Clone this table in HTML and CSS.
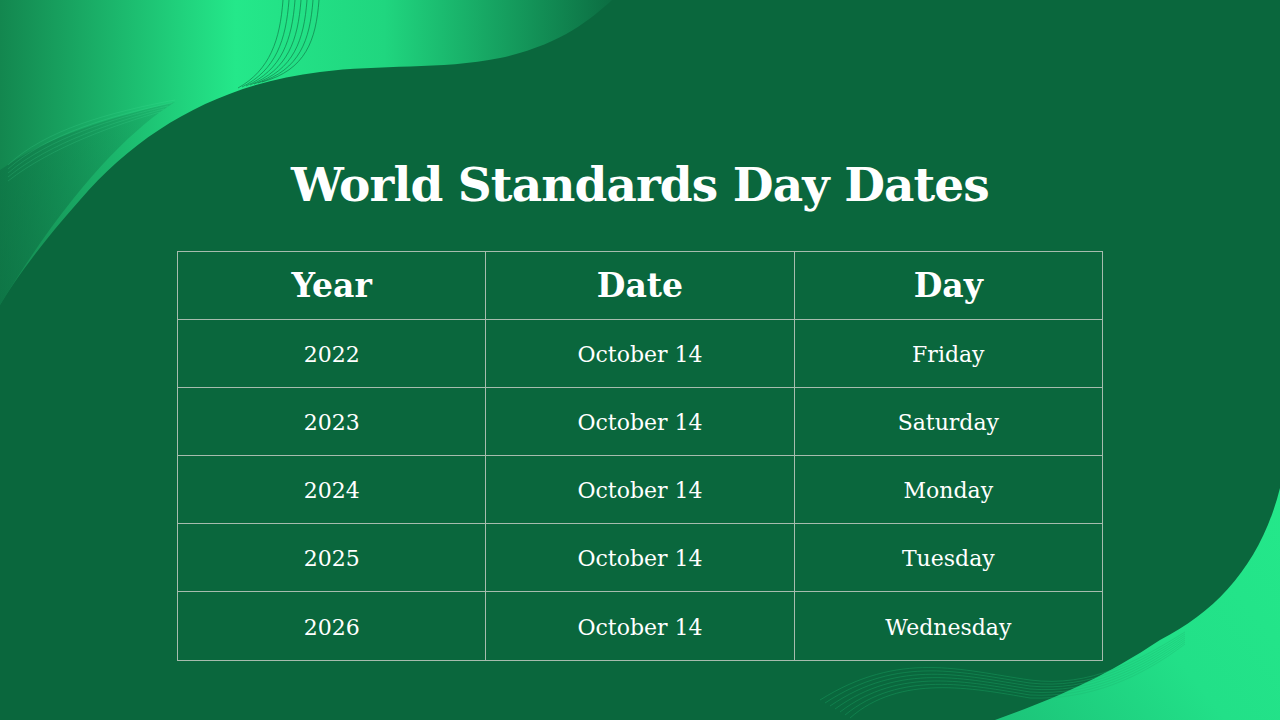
FILE: index.html
```html
<!DOCTYPE html>
<html lang="en">
<head>
<meta charset="utf-8">
<title>World Standards Day Dates</title>
<link rel="stylesheet" href="styles.css">
</head>
<body>
<div class="slide">
  <svg class="bg" width="1280" height="720" viewBox="0 0 1280 720" aria-hidden="true">
    <defs>
      <linearGradient id="gTop" x1="0" y1="0" x2="620" y2="0" gradientUnits="userSpaceOnUse">
        <stop offset="0" stop-color="#13874f"/>
        <stop offset="0.38" stop-color="#24e88a"/>
        <stop offset="0.62" stop-color="#20d67f"/>
        <stop offset="1" stop-color="#0b6a40"/>
      </linearGradient>
      <linearGradient id="gShade" x1="0" y1="300" x2="260" y2="60" gradientUnits="userSpaceOnUse">
        <stop offset="0" stop-color="#0b6a40" stop-opacity="0.6"/>
        <stop offset="1" stop-color="#0b6a40" stop-opacity="0"/>
      </linearGradient>
      <linearGradient id="gBot" x1="1000" y1="720" x2="1280" y2="500" gradientUnits="userSpaceOnUse">
        <stop offset="0" stop-color="#1cc479"/>
        <stop offset="0.5" stop-color="#22e088"/>
        <stop offset="1" stop-color="#24e88a"/>
      </linearGradient>
    </defs>
    <path d="M0 0 H612 C590 20 560 45 500 58 C440 70 380 64 320 72 C220 84 140 130 80 200 C40 245 15 280 0 305 Z" fill="url(#gTop)"/>
    <path d="M0 170 C50 135 110 118 175 102 C130 130 70 190 0 305 Z" fill="url(#gShade)"/>
    <g fill="none" stroke="#0b5a35" stroke-width="0.6" opacity="0.85">
      <path d="M283 0 C280 40 270 70 238 88"/>
      <path d="M289 0 C286 40 276 70 242 87"/>
      <path d="M295 0 C292 40 282 70 246 86"/>
      <path d="M301 0 C298 40 288 70 250 85"/>
      <path d="M307 0 C304 40 294 70 254 84"/>
      <path d="M313 0 C310 40 300 70 258 83"/>
      <path d="M319 0 C316 40 306 70 262 82"/>
    </g>
    <g fill="none" stroke="#4fe6a0" stroke-width="0.5" opacity="0.35">
      <path d="M8 165 C45 130 110 112 175 100"/>
      <path d="M8 169 C47 134 112 115 172 103"/>
      <path d="M8 173 C49 138 114 118 168 106"/>
      <path d="M8 177 C51 142 116 121 164 109"/>
      <path d="M8 181 C53 146 118 124 160 112"/>
    </g>
    <path d="M1280 488 C1262 560 1220 610 1160 640 C1100 680 1050 700 995 720 H1280 Z" fill="url(#gBot)"/>
    <g fill="none" stroke="#1fb56f" stroke-width="0.6" opacity="0.55">
      <path d="M820 700 C900 650 960 670 1030 680 C1090 688 1140 660 1185 632"/>
      <path d="M825 703 C900 654 962 673 1030 683 C1090 690 1140 663 1185 634"/>
      <path d="M830 706 C900 658 964 676 1030 686 C1090 692 1140 666 1185 636"/>
      <path d="M835 709 C900 662 966 679 1030 689 C1090 694 1140 669 1185 638"/>
      <path d="M840 712 C900 666 968 682 1030 692 C1090 696 1140 672 1185 640"/>
      <path d="M845 715 C900 670 970 685 1030 695 C1090 698 1140 675 1185 642"/>
      <path d="M850 718 C900 674 972 688 1030 698 C1090 700 1140 678 1185 644"/>
    </g>
  </svg>
  <main class="content">
    <h1 class="title">World Standards Day Dates</h1>
    <table class="dates">
      <thead>
        <tr><th>Year</th><th>Date</th><th>Day</th></tr>
      </thead>
      <tbody>
        <tr><td>2022</td><td>October 14</td><td>Friday</td></tr>
        <tr><td>2023</td><td>October 14</td><td>Saturday</td></tr>
        <tr><td>2024</td><td>October 14</td><td>Monday</td></tr>
        <tr><td>2025</td><td>October 14</td><td>Tuesday</td></tr>
        <tr><td>2026</td><td>October 14</td><td>Wednesday</td></tr>
      </tbody>
    </table>
  </main>
</div>
</body>
</html>
```
FILE: styles.css
```css
* { box-sizing: border-box; }
html, body { margin: 0; padding: 0; }
body { background: #0a673d; }
.slide {
  position: relative;
  width: 1280px;
  height: 720px;
  overflow: hidden;
  background: #0a673d;
  font-family: "DejaVu Serif", "Liberation Serif", serif;
  color: #ffffff;
}
.bg { position: absolute; left: 0; top: 0; }
.content {
  position: relative;
  display: flex;
  flex-direction: column;
  align-items: center;
  padding-top: 150px;
}
.title {
  margin: 0;
  font-size: 47px;
  font-weight: bold;
  line-height: 70px;
  letter-spacing: -0.9px;
}
.dates {
  margin-top: 31px;
  width: 926px;
  border-collapse: collapse;
  table-layout: fixed;
}
.dates th, .dates td {
  border: 1px solid #a6bcae;
  text-align: center;
  height: 68px;
  padding: 0;
}
.dates tbody tr:last-child td { height: 69px; }
.dates th {
  font-size: 33px;
  font-weight: bold;
}
.dates td {
  font-size: 22px;
  font-weight: normal;
  padding-top: 2px;
}
```
